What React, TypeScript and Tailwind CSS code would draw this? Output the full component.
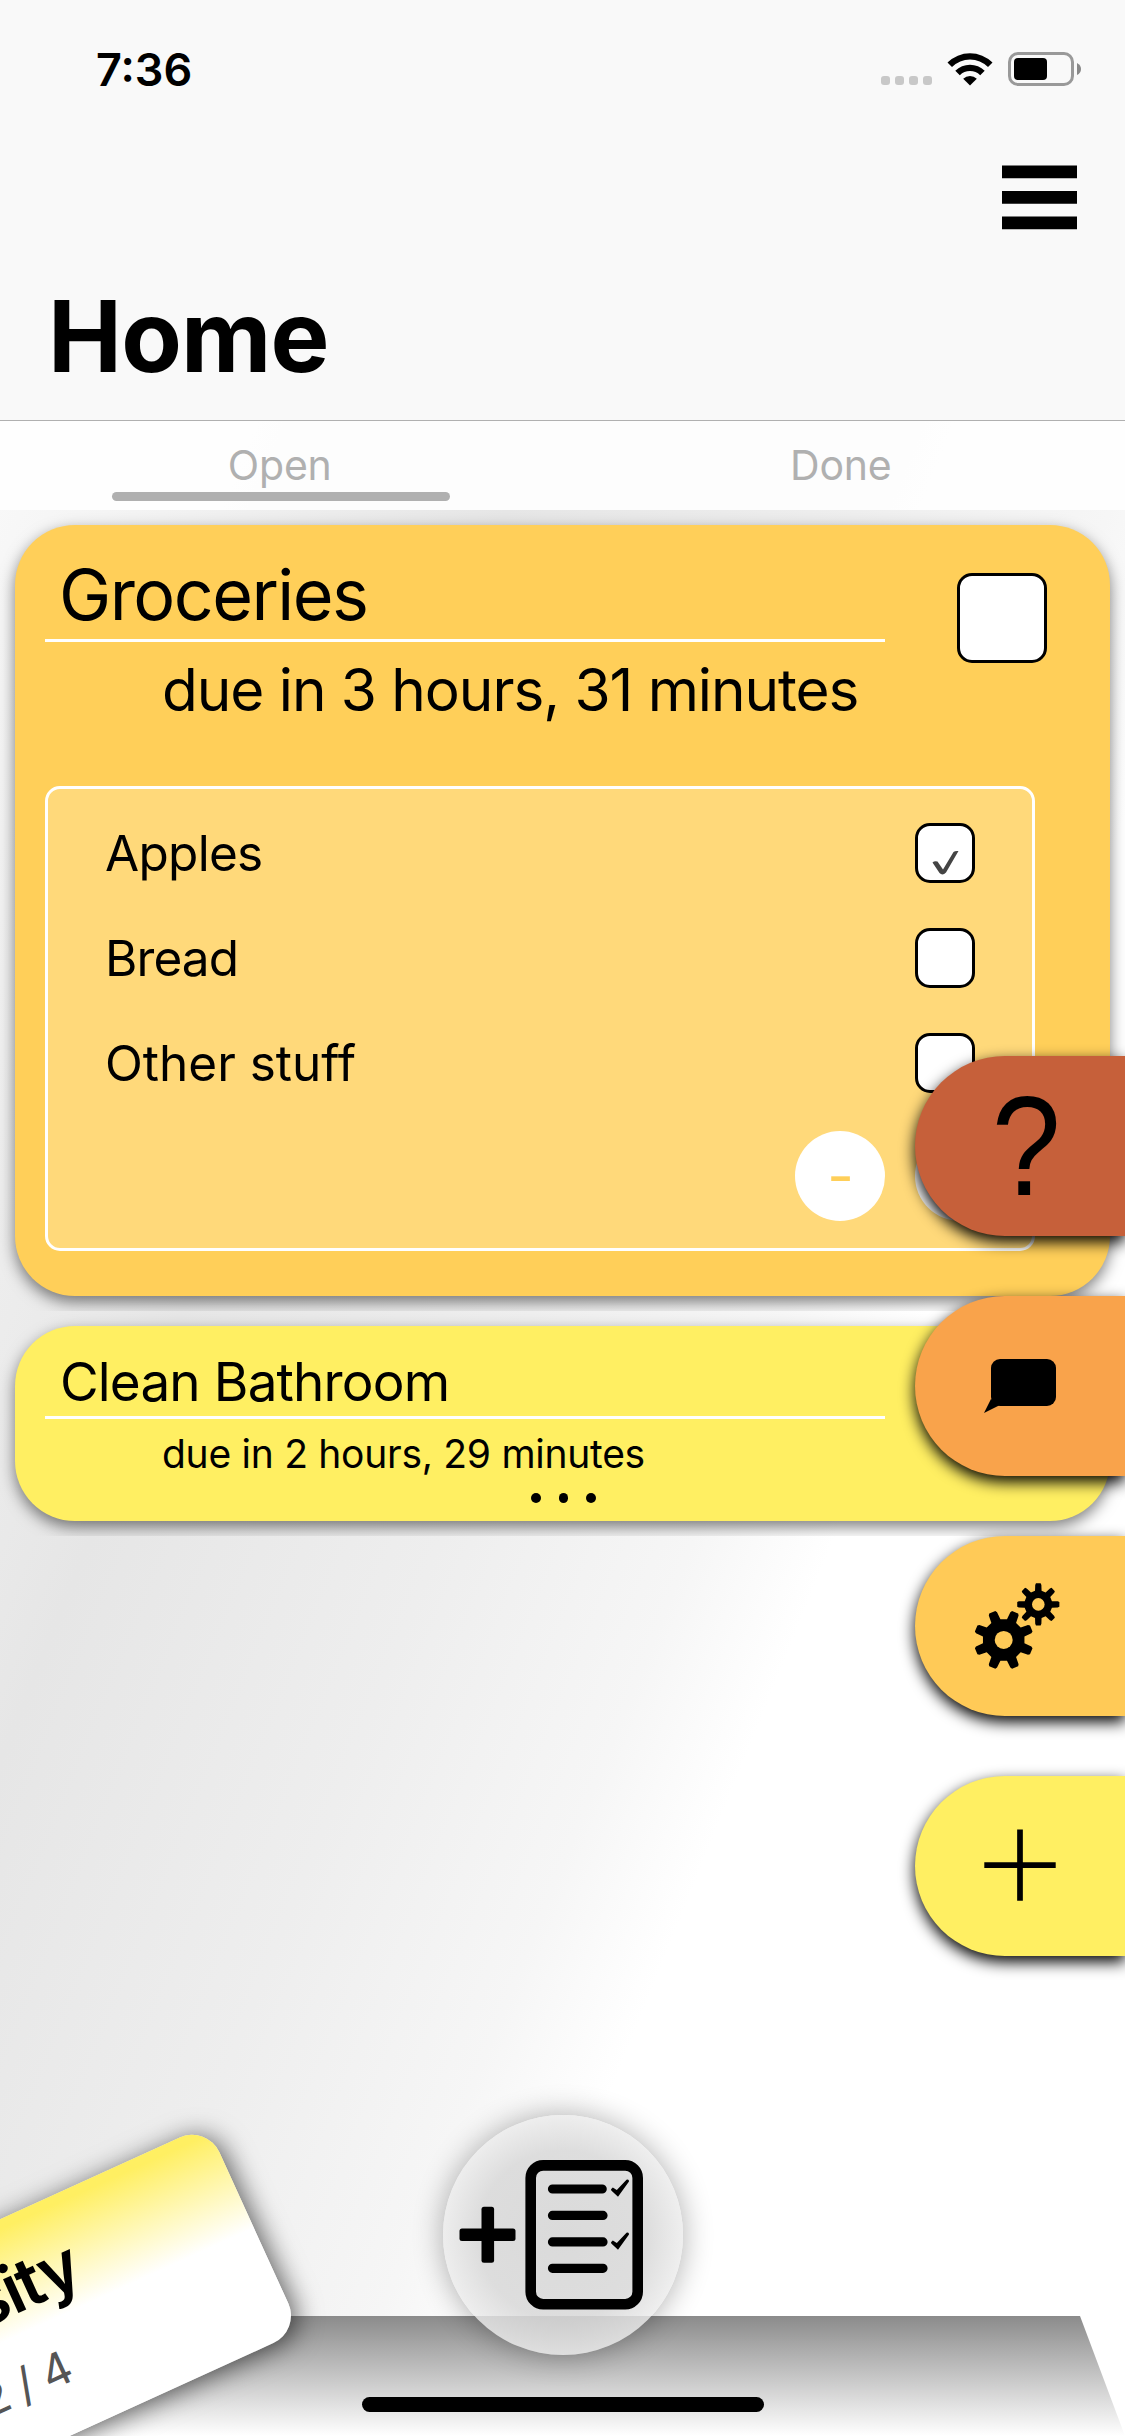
function gearPath(cx: number, cy: number, outer: number, root: number, teeth: number, turn: number) {
  const points: string[] = [];
  const step = (Math.PI * 2) / teeth;
  const corner = (radius: number, angle: number) =>
    `${(cx + radius * Math.cos(angle)).toFixed(2)} ${(cy + radius * Math.sin(angle)).toFixed(2)}`;
  for (let i = 0; i < teeth; i++) {
    const a = turn + i * step;
    points.push(corner(root, a - step * 0.3), corner(outer - 1.5, a - step * 0.2), corner(outer, a - step * 0.14));
    points.push(corner(outer, a + step * 0.14), corner(outer - 1.5, a + step * 0.2), corner(root, a + step * 0.3));
  }
  return `M${points.join("L")}Z`;
}

function Hole({ cx, cy, r }: { cx: number; cy: number; r: number }) {
  return <circle cx={cx} cy={cy} r={r} fill="#ffca57" />;
}

function StatusIcons() {
  return (
    <div className="flex items-end">
      <div className="mb-px flex gap-[5px]">
        {[0, 1, 2, 3].map((i) => (
          <div key={i} className="size-[9px] rounded-[3px] bg-[#c8c8c8]" />
        ))}
      </div>
      <svg className="ml-[15px] h-[34px] w-[46px]" viewBox="0 0 46 34">
        <path d="M0.5 10.5A32 32 0 0 1 45.5 10.5L41 15A25.5 25.5 0 0 0 5 15Z" />
        <path d="M8.3 18.8A21 21 0 0 1 37.7 18.8L33.2 23.2A14.7 14.7 0 0 0 12.8 23.2Z" />
        <path d="M16.2 26.7A10 10 0 0 1 29.8 26.7L23 33.5Z" />
      </svg>
      <svg className="ml-[15px] h-[34px] w-[74px]" viewBox="0 0 74 34">
        <rect x="1.5" y="1.5" width="63" height="31" rx="8.5" fill="none" stroke="#999" strokeWidth="3" />
        <rect x="6" y="6" width="33" height="22" rx="4" />
        <path d="M69 11Q73 13 73 17T69 23Z" fill="#888" />
      </svg>
    </div>
  );
}

function Header() {
  return (
    <header className="h-[421px] border-b border-[#b0b0b0] bg-[#f9f9f9]">
      <div className="flex h-[132px] items-start justify-between pr-[43px] pl-[96px]">
        <span className="mt-[47px] text-[45px] leading-[45px] font-semibold">7:36</span>
        <div className="mt-[52px]">
          <StatusIcons />
        </div>
      </div>
      <div className="flex h-[129px] justify-end pt-[33px] pr-12">
        <svg className="h-[65px] w-[75px]" viewBox="0 0 75 65">
          <path d="M0 0.6H75V13.3H0ZM0 26.1H75V38.8H0ZM0 51.6H75V64.3H0Z" />
        </svg>
      </div>
      <h1 className="pt-[26px] pl-[48px] text-[99px] leading-[99px] font-bold tracking-[-0.8px]">Home</h1>
    </header>
  );
}

function Tabs() {
  return (
    <nav className="grid h-[89px] grid-cols-2 bg-white/90 text-center text-[41px] leading-[41px] tracking-[-0.2px] text-[#b0b0b0]">
      <div className="flex flex-col items-center justify-between pt-[24px] pb-[9px]">
        <span className="pr-[3px]">Open</span>
        <div className="h-[9px] w-[338px] rounded-full bg-[#b0b0b0]" />
      </div>
      <div className="pt-[24px] pr-[6px]">Done</div>
    </nav>
  );
}

function CheckItem({ label, spacing, checked }: { label: string; spacing: string; checked?: boolean }) {
  return (
    <div className="flex h-[105px] items-center justify-between pr-[57px] pl-[57px]">
      <span className={`text-[49.5px] leading-[50px] ${spacing}`}>{label}</span>
      <div className="size-[60px] rounded-[15px] border-3 border-black bg-white">
        {checked && (
          <svg className="mt-[24px] ml-[14px] h-[26px] w-[27px]" viewBox="0 0 27 26">
            <path
              d="M0.5 12.5Q2.5 10.5 5.5 11.5L11 19.5L21.5 2Q23 0.6 26.5 1L14 22.5Q10.5 26 7.5 23Z"
              fill="#444"
            />
          </svg>
        )}
      </div>
    </div>
  );
}

function Groceries() {
  return (
    <div className="overflow-hidden p-[15px]">
      <section className="h-[771px] rounded-[60px] bg-[#ffcf59] pl-[30px] shadow-[0_6px_15px_rgba(0,0,0,0.5)]">
        <div className="flex h-[261px]">
          <div className="w-[840px]">
            <h2 className="h-[117px] border-b-3 border-white pt-[35px] pl-[14px] text-[70px] leading-[70px] tracking-[-1.55px]">
              Groceries
            </h2>
            <p className="pt-[18px] pl-[117px] text-[58.5px] leading-[60px] tracking-[-1.05px] whitespace-nowrap">
              due in 3 hours, 31 minutes
            </p>
          </div>
          <div className="mt-12 ml-[72px] size-[90px] rounded-[15px] border-3 border-black bg-white" />
        </div>
        <div className="h-[465px] w-[990px] rounded-[15px] border-3 border-white bg-[#ffd97a] pt-[11px]">
          <CheckItem label="Apples" spacing="tracking-[-0.7px]" checked />
          <CheckItem label="Bread" spacing="tracking-[-0.9px]" />
          <CheckItem label="Other stuff" spacing="tracking-normal" />
          <div className="mt-4 flex justify-end gap-[30px] pr-[27px] text-[50px] font-medium text-[#ffcf59]">
            <div className="flex size-[90px] items-center justify-center rounded-full bg-white pl-[2px]">
              <span className="scale-x-[1.15]">-</span>
            </div>
            <div className="size-[90px] rounded-full bg-white" />
          </div>
        </div>
      </section>
    </div>
  );
}

function CleanBathroom() {
  return (
    <div className="overflow-hidden p-[15px]">
      <section className="h-[195px] rounded-[60px] bg-[#ffef62] pl-[30px] shadow-[0_6px_15px_rgba(0,0,0,0.5)]">
        <h2 className="h-[93px] w-[840px] border-b-3 border-white pt-[30px] pl-[15px] text-[53px] leading-[53px] tracking-[-0.85px]">
          Clean Bathroom
        </h2>
        <p className="pt-[15px] pl-[117px] text-[39px] leading-[39px] tracking-[-0.28px]">
          due in 2 hours, 29 minutes
        </p>
        <div className="mt-[20px] flex justify-center gap-[18px] pr-[28px]">
          {[0, 1, 2].map((i) => (
            <div key={i} className="size-[9.5px] rounded-full bg-black" />
          ))}
        </div>
      </section>
    </div>
  );
}

const fab = "flex h-[180px] w-[210px] rounded-l-full shadow-[0_6px_15px_rgba(0,0,0,1)]";

function SideActions() {
  return (
    <aside className="absolute top-[1056px] right-0 flex flex-col gap-[60px]">
      <div
        className={`${fab} items-center justify-center bg-[#c6603a] pl-[13px] font-['Liberation_Sans',sans-serif] text-[141px] leading-none`}
      >
        <span className="scale-x-[0.88]">?</span>
      </div>
      <div className={`${fab} bg-[#f9a34b]`}>
        <svg className="mt-[60px] ml-[66px] h-[60px] w-[80px]" viewBox="0 0 80 60">
          <rect x="10" y="3" width="65" height="47" rx="9" />
          <path d="M10 43L3 57L19 49Z" />
        </svg>
      </div>
      <div className={`${fab} bg-[#ffca57]`}>
        <svg className="mt-[43px] ml-[56px] h-[92px] w-[92px]" viewBox="971 1579 92 92">
          <path d={gearPath(1003.7, 1639.9, 30, 21, 8, Math.PI / 8)} />
          <Hole cx={1003.7} cy={1639.9} r={9} />
          <path d={gearPath(1038.3, 1604.4, 21.2, 14, 8, 0)} />
          <Hole cx={1038.3} cy={1604.4} r={6.3} />
        </svg>
      </div>
      <div className={`${fab} bg-[#ffef62]`}>
        <svg className="mt-[53px] ml-[69px] h-[72px] w-[72px]" viewBox="0 0 72 72">
          <path d="M36 0.5V71.8M0.3 36.2H71.7" stroke="black" strokeWidth="5.7" />
        </svg>
      </div>
    </aside>
  );
}

function CategoryCard() {
  return (
    <div className="absolute top-[2125px] -left-[413px] h-[226px] w-[620px] origin-top-right -rotate-[24.5deg] rounded-[30px] bg-[linear-gradient(180deg,#ffef62_4%,#ffffff_50%)] text-right shadow-[4px_4px_26px_rgba(0,0,0,0.6)]">
      <p className="pt-[34px] pr-[177px] text-[68px] leading-[68px] font-semibold tracking-[-2px]">University</p>
      <p className="pt-[35px] pr-[225px] text-[46px] leading-[46px] tracking-[-1px] text-[#555]">2 / 4</p>
    </div>
  );
}

function AddListButton() {
  return (
    <div className="absolute top-[2115px] left-[442.5px] size-[240px] rounded-full bg-[radial-gradient(circle,rgba(212,212,212,0.86)_0%,rgba(216,216,216,0.86)_50%,rgba(234,234,234,0.8)_70%)] shadow-[0_0_30px_rgba(0,0,0,0.32)]">
      <svg className="size-full" viewBox="442.5 2115 240 240">
        <rect x="459" y="2228.5" width="56" height="12.6" rx="2.5" />
        <rect x="481" y="2206.8" width="12.6" height="56" rx="2.5" />
        <rect x="530.2" y="2165.4" width="107" height="138.8" rx="12.5" fill="none" stroke="black" strokeWidth="10.6" />
        <path
          d="M552 2189H601.7M552 2215.4H602.5M552 2241.9H602.5M552 2268.3H602.5"
          stroke="black"
          strokeWidth="9.2"
          strokeLinecap="round"
        />
        {[0, 53].map((dy) => (
          <path
            key={dy}
            transform={`translate(0 ${dy})`}
            d="M610.5 2189.3L612.3 2187.6L616.3 2190L626 2179.8Q628.6 2179 628.5 2181.4L617.5 2196.8L610.8 2190.6Z"
          />
        ))}
      </svg>
    </div>
  );
}

export default function App() {
  return (
    <main className="relative h-[2436px] w-[1125px] overflow-hidden bg-[linear-gradient(112deg,#ffffff_0px,#e6e6e6_660px,#eeeeee_985px,#f6f6f6_1220px,#ffffff_1350px)] font-['Inter',sans-serif] text-black">
      <Header />
      <Tabs />
      <Groceries />
      <CleanBathroom />
      <div className="absolute bottom-0 left-0 h-[120px] w-full bg-[linear-gradient(180deg,#8b8b8b,#ffffff)] [clip-path:polygon(4%_0,96%_0,100%_100%,0_100%)]" />
      <CategoryCard />
      <AddListButton />
      <SideActions />
      <div className="absolute bottom-[24px] left-[362px] h-[15px] w-[402px] rounded-full bg-black" />
    </main>
  );
}
